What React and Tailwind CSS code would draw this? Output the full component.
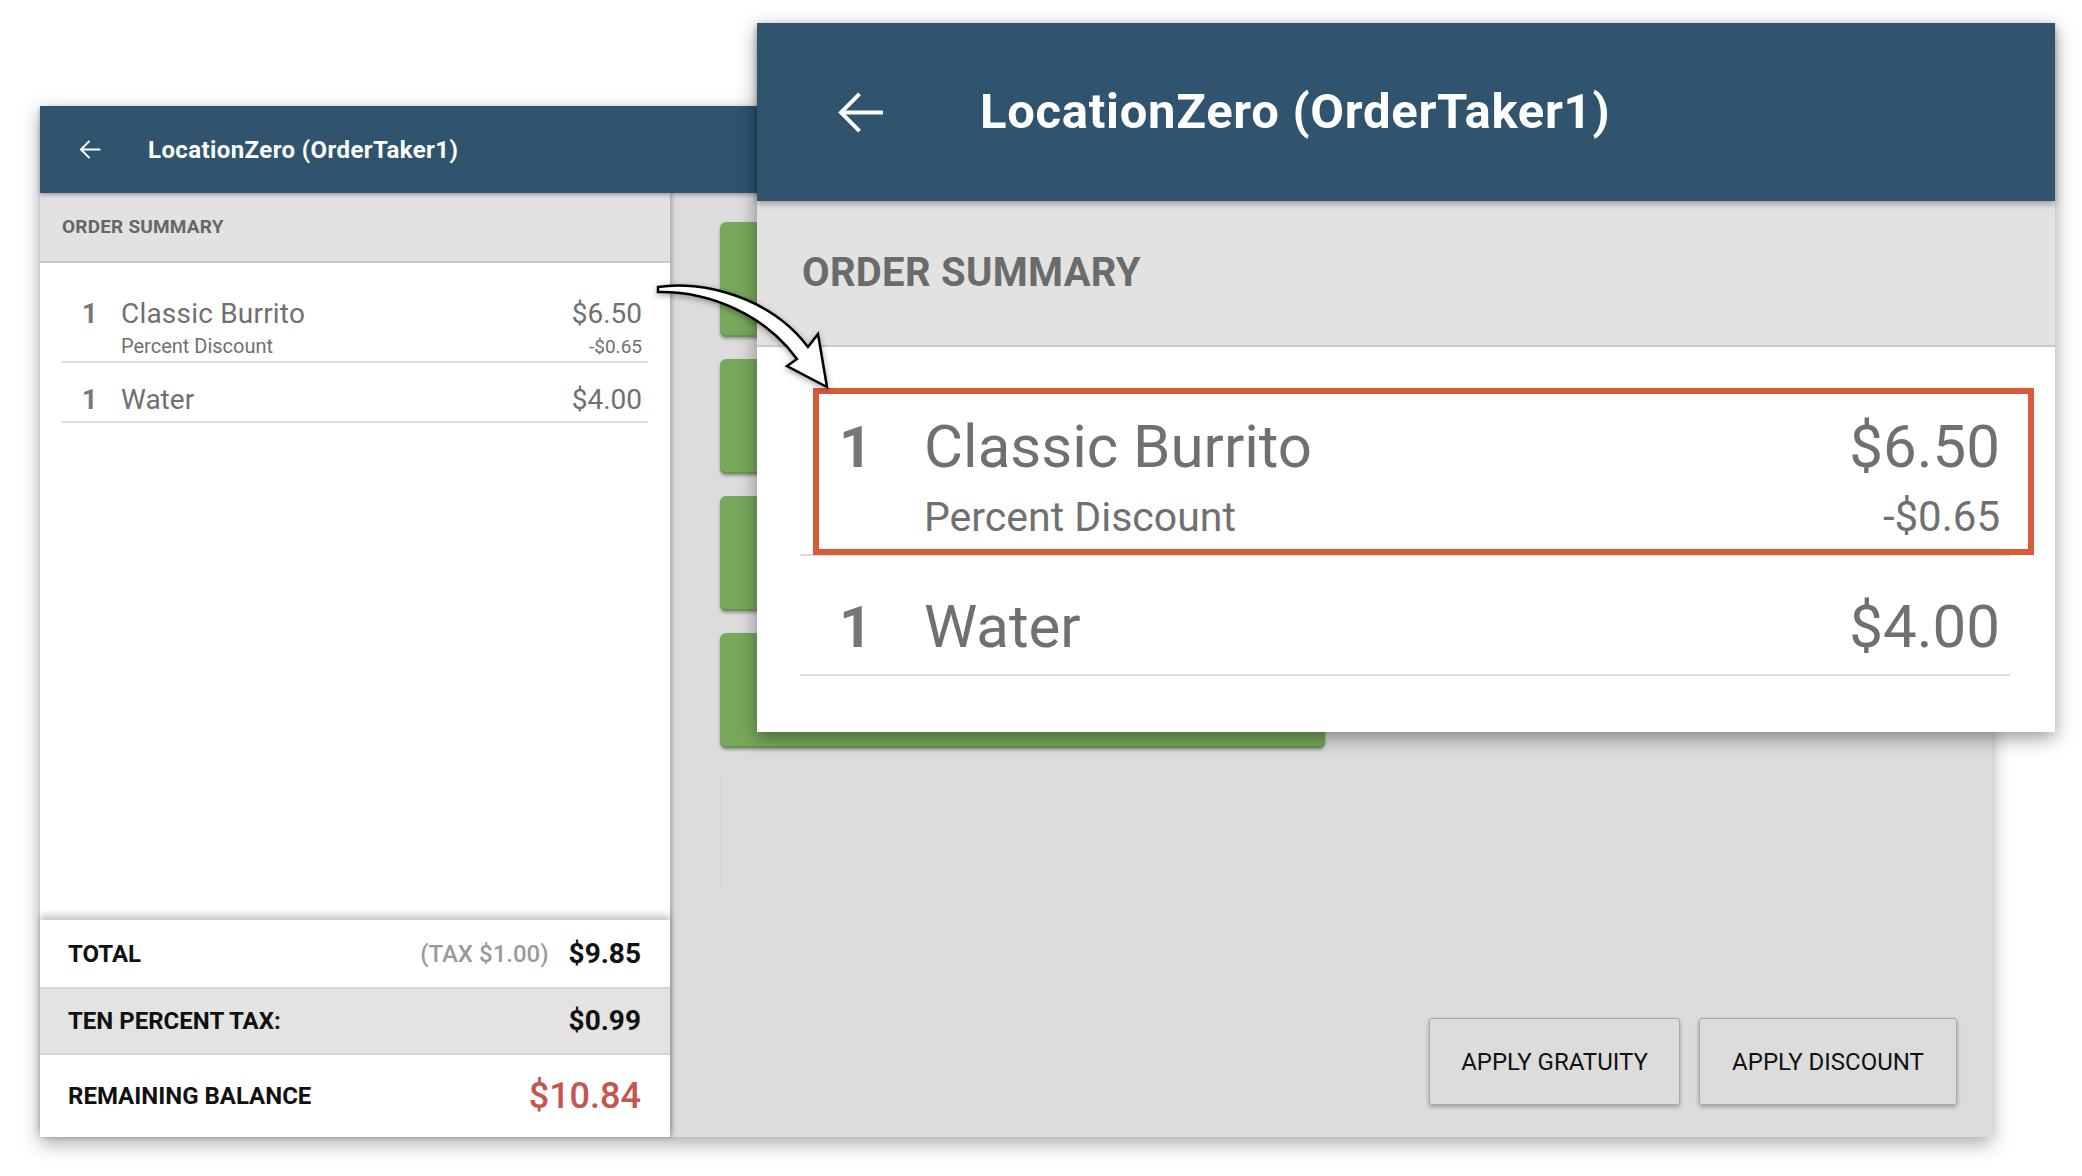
import React from 'react';

// back arrow used in both headers
const BackArrow = ({ className, strokeWidth }) => (
    <svg viewBox="0 0 48 42" className={className} fill="none" stroke="currentColor" strokeWidth={strokeWidth}>
        <path d="M47 21H4" />
        <path d="M23 2L4 21l19 19" />
    </svg>
);

function App() {
    return (
        <div className="relative w-[2082px] h-[1176px] bg-white overflow-hidden font-['Roboto',sans-serif]">
            {/* Background tablet screen */}
            <div className="pt-[106px] pl-[40px]">
                <div className="w-[1952px] h-[1031px] flex flex-col shadow-[0_6px_18px_rgba(0,0,0,0.35)]">
                    <header className="relative h-[87px] bg-[#30536e] flex items-center pl-[39px] text-white shadow-[0_2px_4px_rgba(0,0,0,0.3)] z-20">
                        <BackArrow className="w-[22px] h-[19px]" strokeWidth={4.4} />
                        <h1 className="ml-[47px] text-[24px] font-bold tracking-[0.4px]">LocationZero (OrderTaker1)</h1>
                    </header>

                    <div className="flex-1 flex">
                        {/* Order summary column */}
                        <div className="relative w-[630px] flex flex-col bg-white shadow-[2px_0_4px_rgba(0,0,0,0.25)] z-10">
                            <div className="h-[70px] shrink-0 bg-[#e2e2e2] border-b-2 border-[#cacaca] flex items-center pl-[22px]">
                                <span className="text-[19px] font-bold text-[#666] tracking-[0.2px]">ORDER SUMMARY</span>
                            </div>

                            <div className="flex-1 px-[22px]">
                                <div className="border-b-2 border-[#dcdcdc] pt-[34px] pb-[2px]">
                                    <div className="flex items-baseline pl-[20px] pr-[6px] text-[#707070] leading-[34px]">
                                        <span className="w-[39px] text-[27px] font-bold text-[#777]">1</span>
                                        <span className="flex-1 text-[28px] tracking-[0.2px]">Classic Burrito</span>
                                        <span className="text-[28px]">$6.50</span>
                                    </div>
                                    <div className="flex items-baseline pl-[59px] pr-[6px] mt-[3px] text-[#707070] leading-[24px]">
                                        <span className="flex-1 text-[20px]">Percent Discount</span>
                                        <span className="text-[19px]">-$0.65</span>
                                    </div>
                                </div>
                                <div className="border-b-2 border-[#dcdcdc] pt-[20px] pb-[4px]">
                                    <div className="flex items-baseline pl-[20px] pr-[6px] text-[#707070] leading-[34px]">
                                        <span className="w-[39px] text-[27px] font-bold text-[#777]">1</span>
                                        <span className="flex-1 text-[28px]">Water</span>
                                        <span className="text-[28px]">$4.00</span>
                                    </div>
                                </div>
                            </div>

                            {/* Totals */}
                            <div className="shrink-0 shadow-[0_-5px_7px_rgba(0,0,0,0.22)]">
                                <div className="h-[67px] flex items-center pl-[28px] pr-[29px] bg-white text-[#111]">
                                    <span className="flex-1 text-[24px] font-bold">TOTAL</span>
                                    <span className="text-[24px] font-medium text-[#9a9a9a] mr-[20px]">(TAX $1.00)</span>
                                    <span className="text-[28px] font-bold">$9.85</span>
                                </div>
                                <div className="h-[68px] flex items-center pl-[28px] pr-[29px] bg-[#e3e3e3] border-y-2 border-[#d4d4d4] text-[#111]">
                                    <span className="flex-1 text-[24px] font-bold">TEN PERCENT TAX:</span>
                                    <span className="text-[28px] font-bold">$0.99</span>
                                </div>
                                <div className="h-[82px] flex items-center pl-[28px] pr-[29px] bg-white text-[#111]">
                                    <span className="flex-1 text-[24px] font-bold">REMAINING BALANCE</span>
                                    <span className="text-[36px] font-medium text-[#c4564e]">$10.84</span>
                                </div>
                            </div>
                        </div>

                        {/* Menu area */}
                        <div className="flex-1 flex flex-col bg-[#dcdcdc] pl-[50px] pt-[29px] pr-[35px] pb-[32px]">
                            <div className="flex flex-col gap-[22px] w-[605px]">
                                {[0, 1, 2, 3].map(i => (
                                    <div key={i} className="h-[115px] rounded-[6px] bg-[#78a85c] border-b-2 border-[#679650] shadow-[0_2px_3px_rgba(0,0,0,0.3)]"></div>
                                ))}
                            </div>
                            <div className="mt-[25px] h-[114px] border-l border-[#d5d5d5]"></div>
                            <div className="mt-auto flex justify-end gap-[19px]">
                                <button className="w-[251px] h-[87px] rounded-[3px] border border-[#a9a9a9] bg-[#dcdcdc] text-[24px] text-[#111] shadow-[0_2px_4px_rgba(0,0,0,0.3)]">
                                    APPLY GRATUITY
                                </button>
                                <button className="w-[258px] h-[87px] rounded-[3px] border border-[#a9a9a9] bg-[#dcdcdc] text-[24px] text-[#111] shadow-[0_2px_4px_rgba(0,0,0,0.3)]">
                                    APPLY DISCOUNT
                                </button>
                            </div>
                        </div>
                    </div>
                </div>
            </div>

            {/* Zoomed-in callout of the order summary */}
            <div className="absolute z-30 left-[757px] top-[23px] w-[1298px] h-[709px] flex flex-col bg-white shadow-[0_6px_18px_rgba(0,0,0,0.4)]">
                <header className="relative h-[178px] shrink-0 bg-[#30536e] flex items-center pl-[80px] text-white shadow-[0_3px_6px_rgba(0,0,0,0.3)] z-10">
                    <BackArrow className="w-[47px] h-[41px]" strokeWidth={4} />
                    <h1 className="ml-[96px] text-[49px] font-bold tracking-[0.7px]">LocationZero (OrderTaker1)</h1>
                </header>
                <div className="h-[146px] shrink-0 bg-[#e2e2e2] border-b-2 border-[#cacaca] flex items-center pl-[45px]">
                    <span className="text-[40px] font-bold text-[#6b6b6b] tracking-[0.3px]">ORDER SUMMARY</span>
                </div>
                <div className="relative flex-1 px-[45px] pl-[43px]">
                    <div className="border-b-2 border-[#dcdcdc] pt-[65px] pb-[12px]">
                        <div className="flex items-baseline pl-[39px] pr-[10px] text-[#707070] leading-[70px]">
                            <span className="w-[85px] text-[58px] font-bold text-[#777]">1</span>
                            <span className="flex-1 text-[60px]">Classic Burrito</span>
                            <span className="text-[60px]">$6.50</span>
                        </div>
                        <div className="flex items-baseline pl-[124px] pr-[10px] mt-[10px] text-[#707070] leading-[50px]">
                            <span className="flex-1 text-[41px]">Percent Discount</span>
                            <span className="text-[42px]">-$0.65</span>
                        </div>
                    </div>
                    <div className="border-b-2 border-[#dcdcdc] pt-[36px] pb-[12px]">
                        <div className="flex items-baseline pl-[39px] pr-[10px] text-[#707070] leading-[70px]">
                            <span className="w-[85px] text-[58px] font-bold text-[#777]">1</span>
                            <span className="flex-1 text-[60px]">Water</span>
                            <span className="text-[60px]">$4.00</span>
                        </div>
                    </div>
                    {/* highlight box */}
                    <div className="absolute left-[56px] top-[41px] w-[1221px] h-[167px] border-[6px] border-[#d95a36]"></div>
                </div>
            </div>

            {/* Callout arrow */}
            <svg className="absolute z-40 left-[640px] top-[260px] w-[240px] h-[160px] drop-shadow-[0_2px_3px_rgba(0,0,0,0.35)]" viewBox="0 0 240 160">
                <path
                    d="M18 27 C60 20 130 36 168 87 L178 74 L187 127 L147 106 L157 99 C125 55 70 31 18 32 Z"
                    fill="#fff"
                    stroke="#000"
                    strokeWidth="2.5"
                    strokeLinejoin="miter"
                />
            </svg>
        </div>
    );
}

export default App;
